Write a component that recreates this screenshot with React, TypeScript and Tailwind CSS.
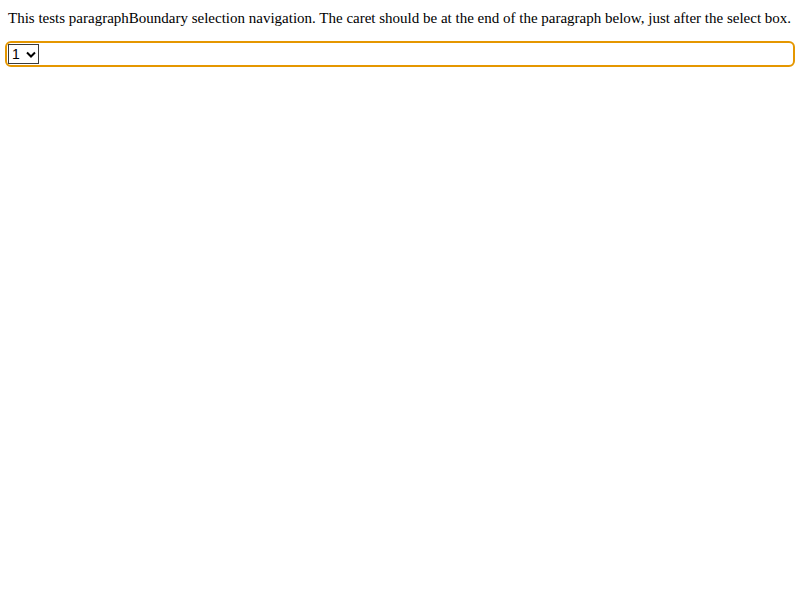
import React from 'react'

export default function App() {
  return (
    <div className="bg-white min-h-[600px] p-2 text-black font-['Liberation_Serif',serif] text-[15px]">
      <div className="leading-[20px] whitespace-nowrap">
        This tests paragraphBoundary selection navigation. The caret should be at the end of the paragraph below, just after the select box.
      </div>
      <div className="mt-[16px] h-[20px] flex items-center outline-2 outline-offset-1 outline-[#e59700] rounded-[3px]">
        <span className="h-[20px] w-[31px] border border-[#3b3b3b] flex items-center pl-[3px] gap-[3px] font-['Liberation_Sans',sans-serif] text-[14px] leading-none bg-white">
          <span>1</span>
          <svg width="10" height="7" viewBox="0 0 10 7" className="ml-[3px]">
            <path d="M1 1.5 L5 5.5 L9 1.5" stroke="#000" strokeWidth="2" fill="none" />
          </svg>
        </span>
      </div>
    </div>
  )
}
